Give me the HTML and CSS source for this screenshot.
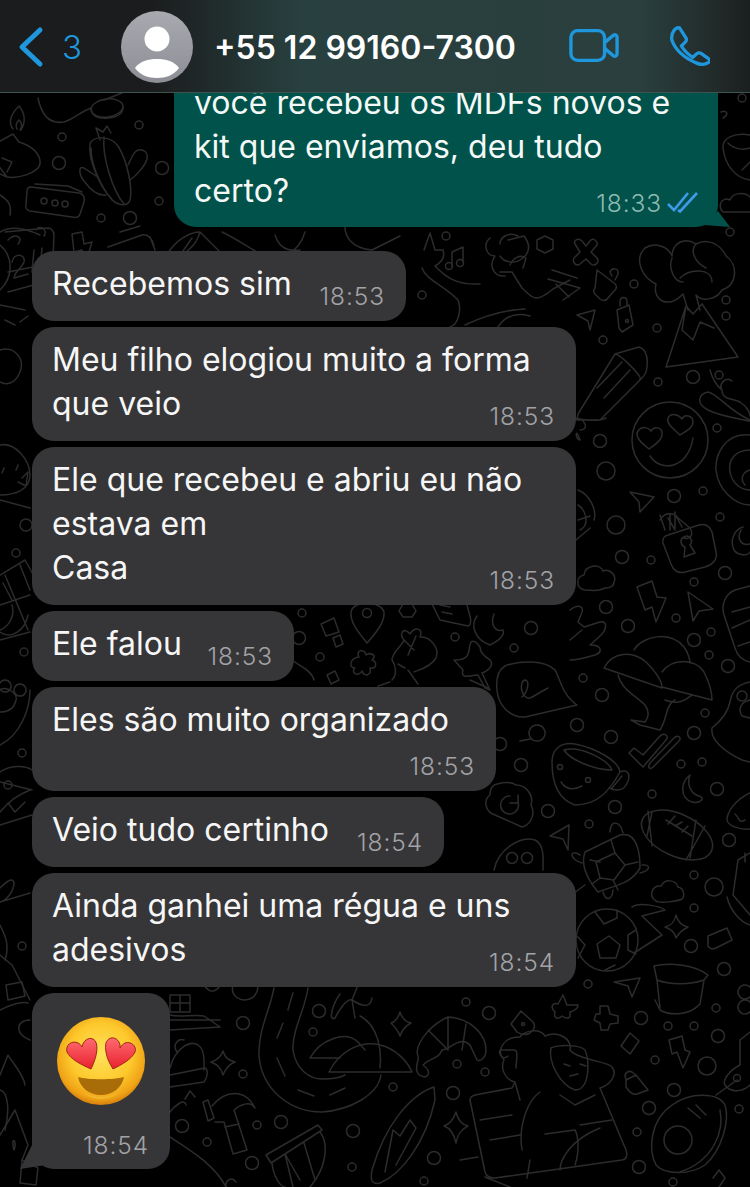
FILE: index.html
```html
<!DOCTYPE html>
<html lang="pt-BR">
<head>
<meta charset="utf-8">
<title>WhatsApp</title>
<link rel="stylesheet" href="styles.css">
</head>
<body>
<div class="screen">
  <svg class="doodles" viewBox="0 0 750 1187" width="750" height="1187" aria-hidden="true">
    <!-- small dots -->
    <g>
      <circle cx="62" cy="137" r="4"/><circle cx="59" cy="163" r="6.5"/><circle cx="162" cy="168" r="6.5"/><circle cx="139" cy="125" r="4"/><circle cx="159" cy="201" r="4"/><circle cx="130" cy="218" r="6.5"/><circle cx="101" cy="218" r="4"/>
      <circle cx="742" cy="98" r="4"/><circle cx="730" cy="232" r="4"/><circle cx="446" cy="236" r="4"/><circle cx="422" cy="295" r="4"/>
      <circle cx="634" cy="284" r="4"/><circle cx="657" cy="328" r="4"/><circle cx="603" cy="340" r="4"/><circle cx="726" cy="300" r="4"/><circle cx="726" cy="316" r="4"/>
      <circle cx="693" cy="377" r="6.5"/><circle cx="719" cy="375" r="4"/><circle cx="658" cy="382" r="4"/><circle cx="600" cy="441" r="6.5"/><circle cx="606" cy="471" r="9"/><circle cx="717" cy="428" r="4"/><circle cx="674" cy="496" r="6.5"/><circle cx="703" cy="491" r="4"/><circle cx="616" cy="525" r="9"/><circle cx="720" cy="517" r="4"/>
      <circle cx="622" cy="557" r="6.5"/><circle cx="651" cy="560" r="4"/><circle cx="725" cy="573" r="6.5"/><circle cx="694" cy="582" r="4"/><circle cx="606" cy="607" r="6.5"/><circle cx="676" cy="618" r="4"/><circle cx="628" cy="626" r="6.5"/><circle cx="711" cy="632" r="4"/><circle cx="694" cy="640" r="6.5"/><circle cx="709" cy="655" r="4"/><circle cx="728" cy="666" r="6.5"/><circle cx="583" cy="678" r="4"/><circle cx="602" cy="695" r="6.5"/><circle cx="577" cy="725" r="6.5"/><circle cx="611" cy="737" r="6.5"/><circle cx="694" cy="733" r="6.5"/><circle cx="705" cy="713" r="4"/>
      <circle cx="500" cy="744" r="6.5"/><circle cx="521" cy="765" r="6.5"/><circle cx="681" cy="764" r="4"/><circle cx="702" cy="762" r="4"/><circle cx="717" cy="789" r="6.5"/><circle cx="652" cy="794" r="4"/><circle cx="615" cy="807" r="6.5"/><circle cx="548" cy="811" r="6.5"/><circle cx="589" cy="824" r="4"/><circle cx="729" cy="840" r="6.5"/><circle cx="694" cy="875" r="4"/><circle cx="714" cy="887" r="9"/><circle cx="694" cy="908" r="4"/><circle cx="691" cy="946" r="6.5"/><circle cx="724" cy="969" r="6.5"/>
      <circle cx="588" cy="984" r="4"/><circle cx="641" cy="1018" r="6.5"/><circle cx="668" cy="1026" r="4"/><circle cx="694" cy="1026" r="4"/><circle cx="718" cy="1036" r="6.5"/><circle cx="716" cy="1008" r="4"/><circle cx="466" cy="1002" r="4"/><circle cx="489" cy="1013" r="6.5"/><circle cx="457" cy="1064" r="4"/><circle cx="485" cy="1072" r="4"/><circle cx="655" cy="1060" r="4"/><circle cx="707" cy="1066" r="9"/><circle cx="674" cy="1090" r="6.5"/><circle cx="649" cy="1108" r="6.5"/><circle cx="637" cy="1132" r="4"/><circle cx="639" cy="1167" r="6.5"/><circle cx="673" cy="1182" r="4"/><circle cx="739" cy="1109" r="4"/><circle cx="453" cy="1093" r="6.5"/><circle cx="434" cy="1158" r="6.5"/><circle cx="424" cy="1181" r="4"/>
      <circle cx="243" cy="1023" r="6.5"/><circle cx="319" cy="1011" r="6.5"/><circle cx="313" cy="1032" r="4"/><circle cx="393" cy="1087" r="4"/><circle cx="281" cy="1122" r="6.5"/><circle cx="257" cy="1125" r="4"/><circle cx="182" cy="1126" r="6.5"/><circle cx="207" cy="1142" r="4"/><circle cx="252" cy="1163" r="6.5"/><circle cx="353" cy="1131" r="6.5"/><circle cx="352" cy="1167" r="4"/><circle cx="243" cy="1074" r="4"/>
      <circle cx="302" cy="613" r="4"/><circle cx="299" cy="638" r="6.5"/><circle cx="320" cy="657" r="4"/><circle cx="455" cy="637" r="4"/><circle cx="531" cy="628" r="6.5"/><circle cx="514" cy="648" r="4"/>
      <circle cx="26" cy="525" r="6"/><circle cx="16" cy="553" r="4"/><circle cx="24" cy="652" r="4"/><circle cx="22" cy="753" r="4"/><circle cx="8" cy="785" r="4"/><circle cx="22" cy="946" r="4"/>
    </g>
    <!-- top left: lamp, bowl, cactus, box -->
    <path d="M13 129C7 121 12 113 19 106C25 113 26 122 21 130M17 129C15 125 17 122 19 120C22 123 22 127 20 130"/>
    <path d="M0 141L13 134L19 142C33 146 41 155 40 164C38 173 18 179 7 177L0 174M7 177L-2 165M2 158L12 162L7 172"/>
    <ellipse cx="107" cy="108" rx="16" ry="9" transform="rotate(-8 107 108)"/>
    <path d="M91 109C92 116 98 119 108 118C118 117 123 113 123 107M91 108C80 112 74 119 64 122C52 124 42 118 38 98M122 93L104 100"/>
    <path d="M90 144C92 136 110 135 118 146C127 160 133 188 130 200C127 208 115 205 110 197C100 186 88 160 90 144ZM104 137C102 155 112 190 124 204M91 148C91 165 100 185 112 200M100 140L96 128L103 132L107 126L111 133M128 165L133 155C138 146 149 150 147 159C145 166 136 176 130 180M96 176L84 168C78 165 79 175 84 181C92 192 100 196 106 195"/>
    <path d="M31 187L79 193C84 194 85 198 84 202L80 214C79 217 76 218 72 217L30 211C26 210 25 207 26 204L27 191C27 188 29 187 31 187ZM82 192L68 186L35 184"/>
    <circle cx="44" cy="201" r="3"/><circle cx="55" cy="203" r="3"/><circle cx="65" cy="204" r="3"/>
    <path d="M0 195C8 200 12 205 10 215M0 232C10 226 25 228 40 235"/>
    <!-- calendar row -->
    <path d="M5 232L48 228C52 228 54 232 54 236L52 280L8 292M8 240C16 232 24 238 18 244M36 230C40 224 48 230 44 236M12 262C14 252 26 254 24 262C22 268 14 272 14 278L28 274M34 250L32 272M42 248L40 270M8 272L48 264"/>
    <path d="M72 234L82 232L84 244L92 242L86 262L82 250L74 252Z"/>
    <path d="M108 247L142 235C148 233 153 240 154 246M120 232L140 226M150 237L155 250"/>
    <path d="M167 255C175 240 190 232 200 232C196 246 185 256 170 258M178 258L192 238M222 232C235 238 246 246 257 252M200 232L220 252"/>
    <path d="M275 235C278 245 285 252 300 250M305 232C302 242 296 250 288 254M345 227C345 235 350 248 372 250L400 236"/>
    <path d="M424 250L430 233L435 250L443 250C445 256 442 262 435 266C448 280 460 285 480 284M422 268C426 280 445 286 458 300C462 310 458 325 450 327"/>
    <path d="M452 266V252L463 247V262"/><circle cx="449" cy="266" r="3.5"/><circle cx="460" cy="263" r="3.5"/>
    <path d="M490 238C482 245 487 256 495 256C488 266 494 277 505 276M500 244C500 236 510 232 518 236"/>
    <path d="M465 325C480 318 500 310 525 309M498 327C505 316 515 312 530 316"/>
    <!-- right, upper cup & cloud -->
    <path d="M750 135C735 132 722 138 723 148C725 165 735 178 750 180M728 143C735 150 745 150 750 148M750 162L742 170"/>
    <path d="M723 212C717 206 722 196 730 200C733 192 745 192 750 197M723 212H750M723 118C730 114 726 110 721 112"/>
    <!-- rope cross hex, lock etc -->
    <path d="M545 236L553 240V249L545 253L537 249V240Z"/>
    <path d="M575 244C573 241 578 237 582 241L586 246L590 241C593 237 598 241 597 245L591 252L597 258C600 262 595 267 591 264L586 259L580 264C576 267 572 262 574 258L580 252Z"/>
    <path d="M597 270L614 283C617 285 617 288 615 290L608 298C606 301 603 301 600 299L596 295C593 293 593 290 595 288ZM612 276L610 272C612 267 619 268 618 274L615 280"/>
    <path d="M617 310L629 305L633 325L622 332L619 328ZM627 305V302C627 296 620 296 620 302V306"/>
    <path d="M577 315L595 310L590 330L588 321Z"/>
    <circle cx="627" cy="321" r="1.5"/>
    <!-- hand & bottle -->
    <path d="M500 272L512 272L522 288C533 298 535 304 553 289L570 280M510 265C513 258 520 254 526 258L523 268M552 270L577 278M548 279L580 288L563 300M556 284L569 297"/>
    <path d="M508 240L524 236C530 244 530 252 523 258C514 265 504 262 500 256"/>
    <!-- flower volcano -->
    <path d="M666 367L738 357L702 304L693 314L686 306ZM688 310L683 294C668 310 652 300 656 284C643 278 633 260 645 248C655 242 668 246 672 256C672 244 684 236 696 244C706 238 720 243 726 256C738 264 738 285 722 290C716 300 702 302 696 295L700 310M672 258C668 268 674 282 683 282M696 244C690 250 694 262 706 268M680 278C690 268 712 268 712 282M686 306L682 330L693 340L700 322L714 328"/>
    <!-- pencil -->
    <path d="M578 414L615 354L639 347C650 350 649 372 642 378L600 420L577 420ZM615 354C620 354 642 376 640 379M597 388L622 362M604 398L630 370M577 420L570 418C586 420 598 422 606 418"/>
    <!-- smiley hearts -->
    <circle cx="670" cy="440" r="38"/>
    <path d="M649 449C643 444 634 437 638 431C642 425 649 428 651 431C654 426 662 427 662 433C663 439 656 444 649 449ZM680 435C674 429 666 424 668 418C671 412 679 415 682 419C684 414 693 415 693 422C693 428 686 431 680 435ZM650 456C660 472 688 470 693 438"/>
    <!-- chili -->
    <path d="M710 370C712 378 716 385 722 390C722 400 732 398 740 402C746 406 750 412 750 416M708 392C718 394 728 410 750 420M722 390C718 384 726 376 732 381M708 392C698 394 696 404 708 410C720 416 734 418 750 421"/>
    <!-- spiral -->
    <path d="M750 435C725 432 715 455 716 470C718 490 735 505 750 505M750 450C735 450 728 460 730 472C732 484 742 490 750 490M750 470C742 472 740 480 745 485"/>
    <!-- pointer, berry bottom -->
    <path d="M630 492L654 497L640 512L639 502Z"/>
    <path d="M578 490C590 495 597 510 594 520M578 505C586 510 590 525 580 530M578 520L590 516M576 540L590 528"/>
    <path d="M660 520C664 512 674 512 678 518L690 528C694 535 690 540 684 538M665 530L660 515M670 530V515M675 528V512"/>
    <path d="M580 430C590 430 585 418 575 418M580 440C575 425 575 440 580 440"/>
    <!-- padlock right -->
    <path d="M668 535L699 525C706 523 710 527 712 532L716 552C718 560 712 565 705 567L685 572C678 574 673 570 671 564L663 543C662 539 664 536 668 535ZM675 530L668 518M682 527L676 516"/>
    <path d="M684 557L695 553L690 545C694 540 689 534 684 537C679 539 681 546 685 547Z"/>
    <path d="M743 527C733 530 730 542 734 550C738 556 748 556 750 552M741 530C736 540 742 546 750 544"/>
    <!-- cloud, bolt, pointer, doc, rock hand -->
    <path d="M585 590C575 588 576 576 584 575C585 565 600 563 603 571C610 568 617 576 614 582C614 588 608 588 605 588C598 592 592 590 585 590Z"/>
    <path d="M637 587L652 581L657 597L666 598L656 622L652 607L645 610Z"/>
    <path d="M688 592L713 609L699 611L693 621Z"/>
    <path d="M750 586L735 590C725 594 721 605 724 615L735 648C738 658 745 661 750 662M732 612L750 607M732 628L750 620M738 646L750 642"/>
    <path d="M570 610C578 604 584 606 582 612L578 622L584 627L600 622C608 620 607 630 600 636L590 645C602 645 603 652 595 655C585 658 578 660 570 660M570 640L582 630"/>
    <!-- woman with hat -->
    <path d="M604 668C612 652 632 650 646 662C656 672 662 682 662 688ZM634 650C642 636 670 630 684 647C688 652 690 660 690 663M662 672C672 658 695 658 704 672C710 684 712 694 712 700L662 687M618 675C622 690 635 695 645 705C650 712 648 718 645 722L631 720L640 725L660 730C668 718 665 705 675 700M665 700C680 706 688 698 692 695"/>
    <!-- duck -->
    <path d="M750 682C738 684 732 690 730 702C728 712 722 720 712 728C710 740 725 752 742 760L750 762M750 700C740 702 738 710 742 716L750 718"/>
    <circle cx="742" cy="696" r="5"/>
    <!-- signature box -->
    <path d="M505 666C520 660 545 660 555 670C560 678 562 695 577 705L525 717C510 718 498 705 497 690C496 680 498 670 505 666ZM522 697C528 692 530 680 525 680C518 682 522 700 530 698C535 696 540 692 548 688"/>
    <!-- mid row -->
    <path d="M367 643C358 632 350 622 351 612C353 600 380 600 384 612C385 622 376 633 367 643Z"/>
    <circle cx="367" cy="613" r="4.5"/>
    <path d="M399 611L403 604H412L416 611L412 617H403Z"/>
    <path d="M321 624L334 618L339 632L326 636ZM333 638L340 635L343 644L336 647Z"/>
    <path d="M327 675L335 671L339 680L331 684Z"/>
    <path d="M359 657C355 650 365 648 366 655C370 652 378 655 372 660C378 662 376 670 370 668C372 675 364 678 362 671C358 678 350 672 355 668C348 668 350 658 359 657Z"/>
    <path d="M392 680C398 674 395 664 392 660C392 652 402 646 404 640C398 634 404 626 410 634C415 626 424 628 420 637C430 636 440 648 436 658C430 668 418 670 414 672M404 640L414 650M416 636L408 655M398 664L405 668M408 670L418 684M390 682L378 686"/>
    <path d="M430 600L440 620L468 626C475 624 466 606 466 600M440 605L450 607M442 612L452 614"/>
    <path d="M471 642C467 650 473 660 454 660L463 670C460 680 470 675 478 675L485 688L490 690L482 673C490 670 494 664 490 660C482 655 480 650 480 647C477 642 473 640 471 642Z"/>
    <path d="M477 616C470 625 475 640 490 645C500 640 505 635 503 630C495 632 490 625 494 614"/>
    <path d="M292 660C296 664 312 670 314 680M470 680L488 688"/>
    <!-- right of short bubbles -->
    <path d="M537 725a8 8 0 1 0 .1 0ZM530 739L520 741"/>
    <path d="M552 762C552 748 562 742 575 744C595 748 618 760 620 772C610 790 598 805 575 805C560 800 552 785 552 762ZM564 750C570 760 595 770 612 770C608 760 580 745 564 750ZM620 772C628 768 632 776 626 785C622 792 614 790 609 788M612 788L622 776"/>
    <circle cx="560" cy="767" r="2.5"/><circle cx="588" cy="780" r="2.5"/>
    <path d="M561 782C566 790 574 790 582 786"/>
    <path d="M629 753L643 767L666 740C670 736 664 732 660 736L643 755L634 748ZM653 767L678 742C683 738 678 734 674 738L650 763C647 768 650 770 653 767Z"/>
    <path d="M690 775C680 783 680 798 692 802C700 804 706 798 699 796C692 794 686 786 690 775Z"/>
    <path d="M497 784C505 782 512 782 516 785C526 785 534 795 531 805C536 815 530 825 522 827L495 815C485 812 483 800 490 795C490 788 492 785 497 784ZM510 796A9 9 0 1 0 518 802M518 795V803H510"/>
    <path d="M569 825L550 836L563 839L568 850Z"/>
    <ellipse cx="677" cy="835" rx="38" ry="21" transform="rotate(25 677 835)"/>
    <path d="M648 811L652 846M652 812L647 836M696 820L690 858M705 826L686 860M666 820L692 836M668 824L675 816M675 826L682 822M682 832L688 826"/>
    <path d="M750 793C735 800 727 812 727 820C728 826 740 830 750 829M735 814C740 818 738 824 745 820"/>
    <path d="M494 870C498 850 520 835 535 840C545 845 543 860 543 870"/>
    <circle cx="512" cy="858" r="5.5"/><circle cx="527" cy="858" r="5.5"/>
    <!-- turtle -->
    <path d="M585 852L620 835C640 830 640 862 640 868C630 885 615 885 598 892C588 880 580 866 585 852ZM596 862L615 853L625 865L614 880L600 878Z"/>
    <path d="M610 832C610 820 620 820 623 833M580 855C568 848 570 860 582 863M642 865C650 864 652 870 640 873M603 892C606 902 612 900 613 890M585 885L570 896M600 862L590 860M615 853L611 840M625 865L638 862M613 880L618 890M600 878L592 884"/>
    <path d="M656 901C648 896 652 885 661 886C665 878 676 880 678 887C684 888 685 896 682 899C678 901 660 904 656 901Z"/>
    <path d="M750 853L738 860L733 895L750 915M727 897C730 910 740 922 750 925M745 853V862"/>
    <!-- soccer ball -->
    <circle cx="607" cy="940" r="31"/>
    <path d="M597 944L609 936L620 945L616 958L600 958ZM595 912L604 924L617 918L617 910M636 930L628 935L628 950L636 954M576 935L585 945L578 958M605 970L615 965M632 907C640 902 660 906 665 910L642 916L662 935L634 953"/>
    <path d="M676 915C678 922 682 926 688 927C682 930 678 934 676 938C675 933 671 929 665 927C671 926 675 921 676 915Z"/>
    <path d="M708 936L727 928L732 940L716 948C712 950 708 948 708 945Z"/>
    <path d="M654 966C670 962 695 965 708 975L704 980L700 1004C688 1017 668 1015 660 1010L655 1000M654 966L657 980C670 985 690 985 704 980M657 980L660 1008"/>
    <path d="M614 982L640 978L632 997L628 986Z"/>
    <path d="M745 985a7 7 0 1 0 .1 0M745 1000a7 7 0 1 0 .1 0"/>
    <!-- bottom right group -->
    <path d="M563 995L567 1005L578 1005C578 1010 570 1012 570 1012C571 1018 568 1020 562 1016C558 1020 553 1018 555 1012C550 1008 552 1002 558 1004Z"/>
    <path d="M600 1006H608L610 1014L618 1016V1023L610 1024L608 1030H601L600 1023L594 1020L596 1014H600Z"/>
    <path d="M521 1011L533 1022C536 1026 534 1030 530 1033C525 1036 520 1034 517 1032L511 1024Z"/><circle cx="523" cy="1024" r="1.5"/>
    <path d="M630 1033L639 1041L630 1054L621 1046Z"/>
    <path d="M669 1040L682 1036L685 1050L690 1052L683 1068L677 1052L672 1054Z"/>
    <path d="M626 1080L636 1075L648 1090L637 1094C632 1096 628 1090 626 1087ZM626 1079C623 1074 628 1070 632 1072L637 1076"/>
    <path d="M417 1052C418 1040 432 1024 448 1017C470 1018 486 1034 486 1050C486 1058 480 1062 477 1060L470 1045C460 1035 450 1050 442 1050C438 1060 432 1056 423 1065C430 1070 430 1075 425 1077C410 1075 420 1060 418 1056ZM428 1030L448 1050M448 1017V1050M466 1024L462 1050"/>
    <path d="M500 1050H514C518 1050 517 1055 516 1068M500 1050C498 1056 504 1060 508 1056"/>
    <!-- woman book -->
    <path d="M475 1095L512 1088L515 1082C505 1080 500 1068 504 1060C495 1050 505 1036 520 1037C525 1030 540 1028 545 1036C560 1030 572 1040 570 1050C578 1060 610 1062 612 1067C618 1075 610 1085 600 1088L626 1150C628 1155 626 1160 622 1160L495 1178C490 1178 486 1176 485 1172L470 1100C470 1097 472 1096 475 1095ZM515 1082L520 1100M560 1095L575 1105L595 1095M540 1092C528 1100 518 1125 522 1150M530 1160L527 1178M480 1120L512 1115M490 1140L520 1135M485 1177L510 1187M460 1160L478 1157"/>
    <path d="M551 1048C548 1062 560 1085 575 1090C590 1090 590 1060 585 1050C580 1045 560 1044 551 1048ZM564 1064L570 1066M580 1064L586 1066M570 1076L578 1074"/>
    <path d="M560 1170C560 1160 570 1140 600 1128M545 1134L575 1130C578 1135 580 1150 575 1165M580 1125L612 1120"/>
    <!-- avocado -->
    <path d="M672 1105C650 1120 648 1150 656 1165C665 1175 690 1175 705 1165C722 1150 730 1120 725 1105C718 1092 690 1092 672 1105ZM716 1095L737 1080"/><circle cx="737" cy="1078" r="3.5"/>
    <circle cx="678" cy="1140" r="14"/>
    <path d="M720 1110C724 1130 715 1160 680 1172M688 1108L700 1118M696 1105L706 1115"/>
    <!-- bottom right bits -->
    <path d="M750 1032L740 1040L740 1065C730 1070 722 1080 725 1085C732 1095 745 1090 750 1085"/>
    <path d="M719 1170L725 1178L719 1187M719 1170L713 1178"/>
    <!-- surfboard -->
    <path d="M434 1087C410 1095 385 1125 372 1170C370 1180 372 1185 380 1183C400 1175 425 1145 435 1100ZM410 1120L400 1136L393 1130L385 1172M410 1120L416 1128L396 1165"/>
    <path d="M456 1112C458 1120 462 1125 468 1126C462 1129 458 1133 456 1143C454 1133 450 1128 444 1126C450 1124 454 1118 456 1112Z"/>
    <!-- road and hills -->
    <path d="M274 988C270 1010 258 1030 259 1056C262 1090 290 1112 322 1112C350 1110 378 1095 381 1075M308 988C305 1010 292 1030 293 1050C296 1070 310 1079 322 1079C330 1079 340 1078 345 1075M293 993C291 1000 289 1005 288 1010M283 1023L277 1038M277 1058L285 1076M298 1090L314 1096M330 1095L345 1088"/>
    <path d="M310 1058C320 1040 345 1030 358 1042L365 1050M329 1072C340 1050 362 1040 380 1045C395 1048 408 1062 412 1072ZM310 1058H340"/>
    <path d="M360 1016C378 1025 382 1050 380 1068M355 1018L352 1000C345 998 335 1018 335 1018C328 1022 332 1005 340 994M352 1000C360 1005 370 1010 372 998M358 985L352 1000"/>
    <path d="M400 1012C402 1018 405 1022 411 1023C405 1026 402 1030 400 1036C398 1030 394 1026 391 1023C396 1022 398 1018 400 1012Z"/>
    <!-- hammer, hat, drum -->
    <path d="M203 1102L208 1100L214 1118L208 1121ZM212 1106C225 1090 245 1088 255 1108C250 1100 240 1105 234 1110L247 1150L233 1154L224 1122L215 1122M225 1127L239 1124"/>
    <path d="M223 1051C225 1058 228 1060 235 1062C229 1064 226 1068 223 1075C221 1068 218 1065 211 1062C218 1060 221 1057 223 1051Z"/>
    <path d="M170 1068C175 1048 190 1040 198 1045C205 1050 204 1060 204 1070M170 1075L205 1068C209 1070 207 1078 204 1082L170 1087M177 1052C172 1045 178 1038 184 1040"/>
    <path d="M266 1155L318 1125L322 1130L271 1163ZM272 1163C273 1175 280 1187 285 1187M320 1132C330 1145 325 1170 310 1187M285 1154L293 1187M304 1143L315 1180M285 1154L300 1180"/>
    <path d="M185 1099L190 1091L195 1097M170 1112C175 1105 185 1098 186 1105"/>
    <path d="M170 1137C190 1150 215 1165 226 1187"/>
    <path d="M226 1187C225 1180 232 1176 236 1182"/>
    <!-- house -->
    <path d="M170 1020H220M170 1015C180 1018 192 1014 204 1016L220 1027L170 1030M170 995H190V1012H170ZM180 995V1012M170 1003H190M204 985C210 994 215 992 220 986M233 985C230 995 240 1004 252 998C256 995 258 990 258 985"/>
    <!-- left rail -->
    <path d="M0 445C15 442 30 460 30 475C30 490 15 495 0 495M16 470L18 465M22 478L28 472L26 486L18 482M0 500L30 508M2 473L4 468"/>
    <path d="M0 575L25 560L35 578M5 575L28 630M3 583L12 600M20 565L30 590M0 605L30 595M0 632C12 640 25 630 28 615M0 630C10 626 15 615 12 605M0 640L30 632"/>
    <path d="M0 690C8 685 18 695 16 700C14 710 6 712 0 712M5 680a6 6 0 1 0 .1 0M20 684a6 6 0 1 0 .1 0M30 690C30 710 20 735 0 745"/>
    <path d="M0 772C10 765 25 765 32 770M0 782L32 790M0 812C10 800 18 795 30 790M0 825L32 815M8 803L15 812L25 802"/>
    <path d="M0 888C8 880 12 878 14 882C14 890 8 900 0 902L30 893M0 925C5 935 10 945 5 960M0 955L12 965L30 1000"/>
    <path d="M0 1010C20 1000 28 1003 28 1003M6 985L22 982L25 996L8 1000ZM30 1020C15 1020 15 1035 30 1040M0 1075L8 1055C12 1062 24 1075 25 1085M0 1090C8 1092 10 1110 5 1130M22 1160L38 1168L36 1185L20 1183Z"/>
    <path d="M0 1135L15 1110L28 1145L22 1160M14 1150C18 1140 10 1135 14 1150"/>
    <path d="M0 245C12 255 15 275 0 290M0 305L25 310M5 320L15 325M20 322L28 316"/>
    <path d="M0 350C15 345 25 360 20 372C15 385 5 385 0 382"/>
  </svg>

  <header class="topbar">
    <svg class="back-icon" viewBox="0 0 26 42" width="26" height="42"><path d="M22 4L4 21L22 38"/></svg>
    <span class="unread">3</span>
    <span class="avatar">
      <svg viewBox="0 0 72 72" width="72" height="72"><circle class="avatar-head" cx="36" cy="28" r="12.5"/><path class="avatar-body" d="M14 57C19 50 27 48 36 48C45 48 53 50 58 57C53 64 45 67 36 67C27 67 19 64 14 57Z"/></svg>
    </span>
    <span class="contact">+55 12 99160-7300</span>
    <svg class="video-icon" viewBox="0 0 52 36" width="50" height="35"><rect x="2" y="2.500" width="35" height="31" rx="7"/><path d="M37 15L46 7.500C48 6 50 7 50 9.500V26.500C50 29 48 30 46 28.500L37 21"/></svg>
    <svg class="phone-icon" viewBox="0 0 42 42" width="40" height="40"><path d="M4 5Q7 1 10 2L17 13Q18 16 15 18L12 21Q16 28 24 33L27 30Q30 27 33 29L40 34Q43 36 41 38Q35 42 28 39C16 34 6 26 2 15Q1 9 4 5Z"/></svg>
  </header>

  <main class="chat">
    <div class="bubble bubble-out">
      <p class="text">você recebeu os MDFs novos e<br>kit que enviamos, deu tudo<br>certo?</p>
      <span class="meta"><span class="time time-out">18:33</span><svg class="ticks" viewBox="0 0 32 22" width="32" height="22"><path d="M1 13L7 19L21 2M11 19L13 20.500L30 2"/></svg></span>
    </div>
    <div class="bubble bubble-in bubble-row w-374"><p class="text">Recebemos sim</p><span class="time">18:53</span></div>
    <div class="bubble bubble-in bubble-over w-544"><p class="text">Meu filho elogiou muito a forma<br>que veio</p><span class="time">18:53</span></div>
    <div class="bubble bubble-in bubble-over w-544"><p class="text">Ele que recebeu e abriu eu não<br>estava em<br>Casa</p><span class="time">18:53</span></div>
    <div class="bubble bubble-in bubble-row w-262"><p class="text">Ele falou</p><span class="time">18:53</span></div>
    <div class="bubble bubble-in bubble-stack w-464"><p class="text">Eles são muito organizado</p><span class="time">18:53</span></div>
    <div class="bubble bubble-in bubble-row w-412"><p class="text">Veio tudo certinho</p><span class="time">18:54</span></div>
    <div class="bubble bubble-in bubble-over w-544"><p class="text">Ainda ganhei uma régua e uns<br>adesivos</p><span class="time">18:54</span></div>
    <div class="bubble bubble-in bubble-emoji w-138 has-tail">
      <svg class="emoji" viewBox="0 0 92 92" width="92" height="92" role="img" aria-label="😍">
        <defs>
          <radialGradient id="face" cx="50%" cy="42%" r="58%"><stop offset="0" stop-color="#ffe25c"/><stop offset=".6" stop-color="#fdc92c"/><stop offset=".88" stop-color="#f0a316"/><stop offset="1" stop-color="#d67f0c"/></radialGradient>
          <linearGradient id="heart" x1="0" y1="0" x2="0" y2="1"><stop offset="0" stop-color="#ff6a70"/><stop offset="1" stop-color="#e8212f"/></linearGradient>
        </defs>
        <circle cx="46" cy="46" r="44" fill="url(#face)"/>
        <path fill="url(#heart)" stroke="#9e2a12" stroke-width="1" d="M36 54C27 50 15 44 12 37C10 30 17 25 23 28C25 29 26 30 27 32C28 26 33 22 38 24C44 27 43 40 36 54Z"/>
        <path fill="url(#heart)" stroke="#9e2a12" stroke-width="1" d="M58 54C66 50 77 44 80 37C82 31 76 26 70 28C68 29 66 31 65 33C66 27 61 22 56 23C50 25 50 31 51 37C52 44 55 49 58 54Z"/>
        <path fill="#a86c08" d="M23 62C33 65 59 65 69 62C67 73 57 80 46 80C35 80 25 73 23 62Z"/>
        <path fill="#f0b52a" d="M26 76C32 82 40 84 46 84C52 84 60 82 66 76C60 80 52 81.500 46 81.500C40 81.500 32 80 26 76Z"/>
      </svg>
      <span class="time">18:54</span>
    </div>
  </main>
</div>
</body>
</html>
```

FILE: styles.css
```css
* { box-sizing: border-box; }
html, body { margin: 0; padding: 0; background: #000; }
.screen {
  position: relative;
  width: 750px;
  height: 1187px;
  display: flex;
  flex-direction: column;
  overflow: hidden;
  background: #000;
  font-family: "Inter", "Liberation Sans", sans-serif;
}
.doodles {
  position: absolute;
  inset: 0;
  fill: none;
  stroke: #2c2c2c;
  stroke-width: 1.5;
  stroke-linecap: round;
  stroke-linejoin: round;
}
.topbar {
  position: relative;
  z-index: 2;
  flex: 0 0 93px;
  display: flex;
  align-items: center;
  padding: 2px 0 0 18px;
  background: linear-gradient(90deg, #1b1c1d 0, #1b1c1d 150px, #28403f 300px, #2a3f3e 640px, #212b2a 715px, #1c1f1f 750px);
  border-bottom: 1px solid #3a5450;
}
.back-icon { flex: none; fill: none; stroke: #1f97dc; stroke-width: 5; stroke-linecap: round; stroke-linejoin: round; }
.unread { margin-left: 18px; width: 59px; flex: none; font-size: 33px; font-weight: 300; color: #1f97dc; }
.avatar {
  flex: none;
  width: 72px;
  height: 72px;
  border-radius: 50%;
  overflow: hidden;
  background: linear-gradient(180deg, #a9aab0, #8d8e96);
}
.avatar svg { display: block; }
.avatar-head, .avatar-body { fill: #fff; }
.contact {
  flex: 1;
  margin-left: 21px;
  font-size: 32px;
  font-weight: 600;
  color: #fff;
  white-space: nowrap;
}
.video-icon { flex: none; margin-bottom: 3px; fill: none; stroke: #1f97dc; stroke-width: 3.5; stroke-linejoin: round; }
.phone-icon { flex: none; margin: 0 40px 3px 51px; fill: none; stroke: #1f97dc; stroke-width: 3.5; stroke-linejoin: round; }

.chat {
  position: relative;
  z-index: 1;
  flex: 1;
  min-height: 0;
  display: flex;
  flex-direction: column;
  justify-content: flex-end;
  gap: 6px;
  padding: 0 0 18px 32px;
}
.bubble {
  position: relative;
  flex: none;
  display: grid;
  padding: 11px 21px 15px 20px;
  border-radius: 22px;
  background: #363638;
}
.text {
  margin: 0;
  font-size: 32px;
  line-height: 44px;
  color: #f6f6f6;
  white-space: nowrap;
}
.time {
  position: relative;
  top: 1px;
  font-size: 24.500px;
  font-weight: 300;
  line-height: 22px;
  letter-spacing: .9px;
  color: #a3a3a7;
}
.bubble-out {
  width: 544px;
  margin: 0 0 18px 142px;
  padding: 14px 21px 14px 20px;
  background: #00524a;
}
.bubble-out .text { color: #f4f8f6; grid-area: 1 / 1; }
.bubble-out::after {
  content: "";
  position: absolute;
  right: -12px;
  bottom: 0;
  width: 26px;
  height: 16px;
  background: #00524a;
  clip-path: polygon(14px 0, 26px 16px, 0 14px);
}
.meta { grid-area: 1 / 1; align-self: end; justify-self: end; display: flex; align-items: center; gap: 5px; margin-right: -2px; }
.time-out { color: #8fbab2; }
.ticks { flex: none; fill: none; stroke: #3d9be9; stroke-width: 2.600; }

.bubble-row { grid-template-columns: 1fr auto; align-items: end; }
.bubble-over > * { grid-area: 1 / 1; }
.bubble-over .time { align-self: end; justify-self: end; }
.bubble-stack .time { justify-self: end; margin-top: 12px; }
.bubble-emoji { padding: 22px 21px 14px 23px; }
.bubble-emoji .time { justify-self: end; margin-top: 26px; }
.emoji { display: block; }

.w-544 { width: 544px; }
.w-464 { width: 464px; }
.w-412 { width: 412px; }
.w-374 { width: 374px; }
.w-262 { width: 262px; }
.w-138 { width: 138px; }

.has-tail::after {
  content: "";
  position: absolute;
  left: -12px;
  bottom: 0;
  width: 26px;
  height: 24px;
  background: #363638;
  clip-path: polygon(12px 0, 26px 20px, 0 24px);
}
```
